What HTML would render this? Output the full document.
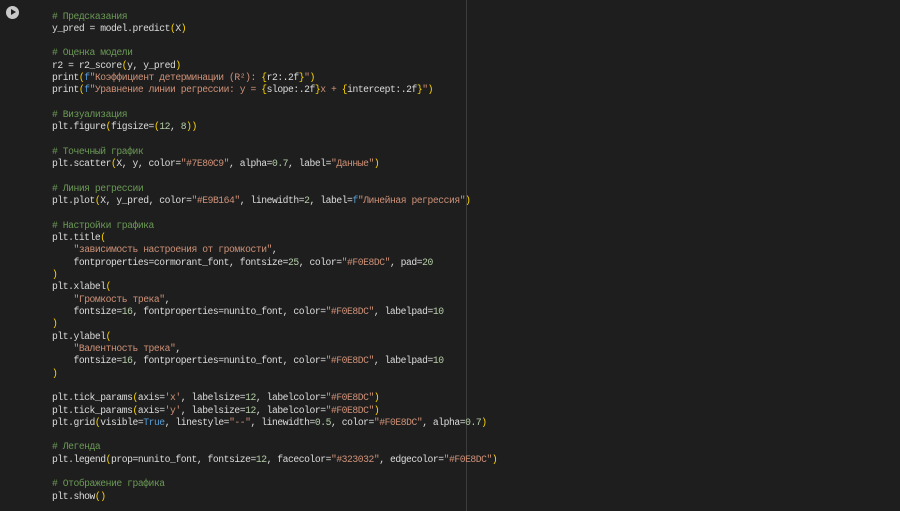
<!DOCTYPE html>
<html><head><meta charset="utf-8"><style>
html,body{margin:0;padding:0;width:900px;height:511px;background:#1e1e1e;overflow:hidden}
pre{position:absolute;left:52px;top:10.5px;margin:0;font-family:"Liberation Mono","DejaVu Sans Mono",monospace;font-size:9.7px;letter-spacing:-0.45px;line-height:12.32px;color:#dcdcdc}
.c{color:#6a9955}.s{color:#ce9178}.n{color:#b5cea8}.b{color:#ffd700}.k{color:#569cd6}
.vl{position:absolute;left:466px;top:0;width:1px;height:511px;background:#3c3c3c}
.play{position:absolute;left:6px;top:5.5px;width:13px;height:13px;border-radius:50%;background:#c8c8c8}
.play:after{content:"";position:absolute;left:5px;top:3.5px;border-left:5px solid #1e1e1e;border-top:3px solid transparent;border-bottom:3px solid transparent}
</style></head><body>
<div class="play"></div>
<div class="vl"></div>
<pre><span class="c"># Предсказания</span>
y_pred = model.predict<span class="b">(</span>X<span class="b">)</span>

<span class="c"># Оценка модели</span>
r2 = r2_score<span class="b">(</span>y, y_pred<span class="b">)</span>
print<span class="b">(</span><span class="k">f</span><span class="s">"Коэффициент детерминации (R²): </span><span class="b">{</span>r2:.2f<span class="b">}</span><span class="s">"</span><span class="b">)</span>
print<span class="b">(</span><span class="k">f</span><span class="s">"Уравнение линии регрессии: y = </span><span class="b">{</span>slope:.2f<span class="b">}</span><span class="s">x + </span><span class="b">{</span>intercept:.2f<span class="b">}</span><span class="s">"</span><span class="b">)</span>

<span class="c"># Визуализация</span>
plt.figure<span class="b">(</span>figsize=<span class="b">(</span><span class="n">12</span>, <span class="n">8</span><span class="b">))</span>

<span class="c"># Точечный график</span>
plt.scatter<span class="b">(</span>X, y, color=<span class="s">"#7E80C9"</span>, alpha=<span class="n">0.7</span>, label=<span class="s">"Данные"</span><span class="b">)</span>

<span class="c"># Линия регрессии</span>
plt.plot<span class="b">(</span>X, y_pred, color=<span class="s">"#E9B164"</span>, linewidth=<span class="n">2</span>, label=<span class="k">f</span><span class="s">"Линейная регрессия"</span><span class="b">)</span>

<span class="c"># Настройки графика</span>
plt.title<span class="b">(</span>
    <span class="s">"зависимость настроения от громкости"</span>,
    fontproperties=cormorant_font, fontsize=<span class="n">25</span>, color=<span class="s">"#F0E8DC"</span>, pad=<span class="n">20</span>
<span class="b">)</span>
plt.xlabel<span class="b">(</span>
    <span class="s">"Громкость трека"</span>,
    fontsize=<span class="n">16</span>, fontproperties=nunito_font, color=<span class="s">"#F0E8DC"</span>, labelpad=<span class="n">10</span>
<span class="b">)</span>
plt.ylabel<span class="b">(</span>
    <span class="s">"Валентность трека"</span>,
    fontsize=<span class="n">16</span>, fontproperties=nunito_font, color=<span class="s">"#F0E8DC"</span>, labelpad=<span class="n">10</span>
<span class="b">)</span>

plt.tick_params<span class="b">(</span>axis=<span class="s">'x'</span>, labelsize=<span class="n">12</span>, labelcolor=<span class="s">"#F0E8DC"</span><span class="b">)</span>
plt.tick_params<span class="b">(</span>axis=<span class="s">'y'</span>, labelsize=<span class="n">12</span>, labelcolor=<span class="s">"#F0E8DC"</span><span class="b">)</span>
plt.grid<span class="b">(</span>visible=<span class="k">True</span>, linestyle=<span class="s">"--"</span>, linewidth=<span class="n">0.5</span>, color=<span class="s">"#F0E8DC"</span>, alpha=<span class="n">0.7</span><span class="b">)</span>

<span class="c"># Легенда</span>
plt.legend<span class="b">(</span>prop=nunito_font, fontsize=<span class="n">12</span>, facecolor=<span class="s">"#323032"</span>, edgecolor=<span class="s">"#F0E8DC"</span><span class="b">)</span>

<span class="c"># Отображение графика</span>
plt.show<span class="b">()</span></pre>
</body></html>
